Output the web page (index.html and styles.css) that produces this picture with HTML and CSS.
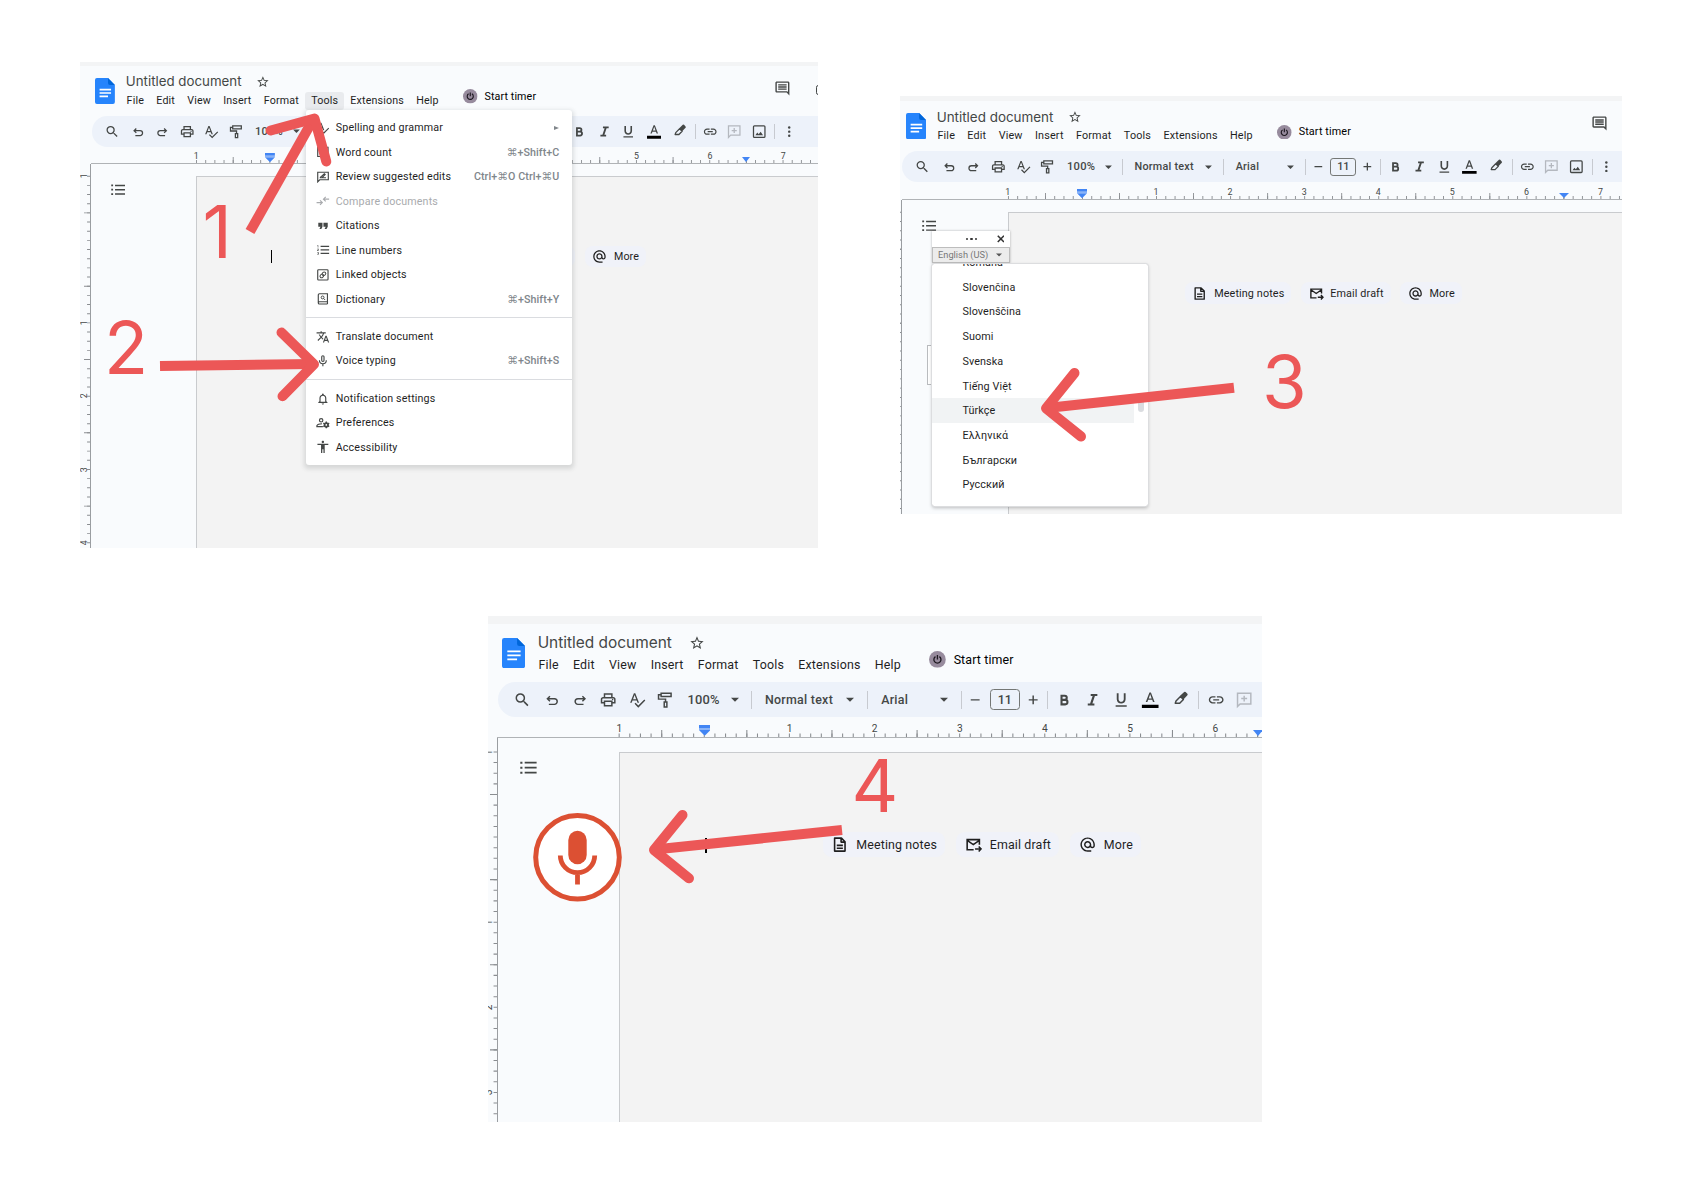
FILE: index.html
```
<!DOCTYPE html>
<html lang="en">
<head>
  <meta charset="UTF-8" />
  <title>Voice typing in Docs</title>
  <meta name="viewport" content="width=device-width, initial-scale=1" />
  <link rel="stylesheet" href="styles.css">
</head>
<body>

  <!-- shared icons -->
  <svg class="defs" width="0" height="0">
    <symbol id="i-logo" viewBox="0 0 26 34"><path fill="#2684fc" d="M2.500 0H17l9 9v22.500a2.500 2.500 0 0 1-2.500 2.500h-21A2.500 2.500 0 0 1 0 31.500v-29A2.500 2.500 0 0 1 2.500 0z"/><path fill="#0066da" d="M17 0l9 9h-6.500A2.500 2.500 0 0 1 17 6.500z"/><path fill="#fff" d="M6 14h15v2.200H6zM6 18.500h15v2.200H6zM6 23h11v2.200H6z"/></symbol>
    <symbol id="i-star" viewBox="0 0 24 24"><path fill="currentColor" d="M22 9.240l-7.190-.62L12 2 9.190 8.630 2 9.240l5.460 4.730L5.820 21 12 17.270 18.180 21l-1.630-7.030L22 9.240zM12 15.400l-3.760 2.270 1-4.280-3.320-2.880 4.380-.38L12 6.100l1.710 4.040 4.380.38-3.320 2.880 1 4.280L12 15.400z"/></symbol>
    <symbol id="i-power" viewBox="0 0 19 19"><circle cx="9.500" cy="9.500" r="9.500" fill="#978b9d"/><path fill="none" stroke="#1d1820" stroke-width="1.500" d="M7.300 6.300a4 4 0 1 0 4.400 0M9.500 4.500v5"/></symbol>
    <symbol id="i-comments" viewBox="0 0 24 24"><path fill="currentColor" d="M21.990 4c0-1.100-.89-2-1.990-2H4c-1.100 0-2 .9-2 2v12c0 1.100.9 2 2 2h14l4 4-.01-18zM20 4v13.170L18.830 16H4V4h16zM6 12h12v2H6zm0-3h12v2H6zm0-3h12v2H6z"/></symbol>
    <symbol id="i-search" viewBox="0 0 24 24"><path fill="currentColor" d="M15.500 14h-.79l-.28-.27A6.471 6.471 0 0 0 16 9.500 6.500 6.500 0 1 0 9.500 16c1.610 0 3.090-.59 4.230-1.570l.27.28v.79l5 4.990L20.490 19l-4.990-5zm-6 0C7.010 14 5 11.990 5 9.500S7.010 5 9.500 5 14 7.010 14 9.500 11.990 14 9.500 14z"/></symbol>
    <symbol id="i-undo" viewBox="0 0 24 24"><path fill="none" stroke="currentColor" stroke-width="2" d="M9 7l-3.500 3.500L9 14M6 10.500h9a3.800 3.800 0 0 1 0 7.600H7.500"/></symbol>
    <symbol id="i-redo" viewBox="0 0 24 24"><path fill="none" stroke="currentColor" stroke-width="2" d="M15 7l3.500 3.500L15 14M18 10.500H9a3.800 3.800 0 0 0 0 7.600h7.500"/></symbol>
    <symbol id="i-print" viewBox="0 0 24 24"><path fill="currentColor" d="M19 8h-1V3H6v5H5c-1.660 0-3 1.340-3 3v6h4v4h12v-4h4v-6c0-1.660-1.340-3-3-3zM8 5h8v3H8V5zm8 12v2H8v-4h8v2zm2-2v-2H6v2H4v-4c0-.55.45-1 1-1h14c.55 0 1 .45 1 1v4h-2z"/><circle cx="18" cy="11.500" r="1" fill="currentColor"/></symbol>
    <symbol id="i-spell" viewBox="0 0 24 24"><path fill="currentColor" d="M12.450 16h2.090L9.430 3H7.570L2.460 16h2.090l1.120-3h5.640l1.140 3zm-6.020-5L8.500 5.480 10.570 11H6.430zm15.160.59l-8.090 8.090L9.830 16l-1.410 1.410 5.090 5.090L23 13l-1.410-1.410z"/></symbol>
    <symbol id="i-paint" viewBox="0 0 24 24"><path fill="none" stroke="currentColor" stroke-width="2" d="M6.500 3H20v4.500H6.500zM6.500 5.200H3V11h9.500v4M10.700 15h3.600v6.500h-3.600z"/></symbol>
    <symbol id="i-caret" viewBox="0 0 10 6"><path fill="currentColor" d="M0 .5h10L5 5.500z"/></symbol>
    <symbol id="i-minus" viewBox="0 0 24 24"><path fill="currentColor" d="M6 11h12v2H6z"/></symbol>
    <symbol id="i-plus" viewBox="0 0 24 24"><path fill="currentColor" d="M18 13h-5v5h-2v-5H6v-2h5V6h2v5h5z"/></symbol>
    <symbol id="i-bold" viewBox="0 0 24 24"><path fill="none" stroke="currentColor" stroke-width="2.800" d="M8.400 6.400h4.300a2.800 2.800 0 0 1 0 5.600H8.400zM8.400 12h5a3.050 3.050 0 0 1 0 6.100h-5zM8.400 5v14.500"/></symbol>
    <symbol id="i-italic" viewBox="0 0 24 24"><path fill="currentColor" d="M10 4v2.700h2.600L9.200 16.800H6v2.700h9v-2.700h-2.700l3.400-10.100H19V4z"/></symbol>
    <symbol id="i-underline" viewBox="0 0 24 24"><path fill="currentColor" d="M12 17c3.310 0 6-2.690 6-6V3h-2.500v8c0 1.930-1.570 3.500-3.500 3.500S8.500 12.930 8.500 11V3H6v8c0 3.310 2.690 6 6 6zM4.500 19.300v2h15v-2h-15z"/></symbol>
    <symbol id="i-color" viewBox="0 0 24 24"><path fill="currentColor" d="M11 2L6 15h2.200l1.100-3h5.400l1.100 3H18L13 2h-2zm-1 8.200l2-5.700 2 5.700z"/><path fill="#000" d="M.7 18.500h22.600V23H.7z"/></symbol>
    <symbol id="i-pen" viewBox="0 0 24 24"><path fill="none" stroke="currentColor" stroke-width="2" stroke-linejoin="round" d="M5 13.500l6-6 4 4-5 5H4z"/><path fill="currentColor" d="M10.500 6.500L16 1.300q1-.8 2 0l2.400 2.500q.8 1 0 2L15 11.500z"/></symbol>
    <symbol id="i-link" viewBox="0 0 24 24"><path fill="currentColor" d="M3.900 12c0-1.710 1.390-3.100 3.100-3.100h4V7H7c-2.760 0-5 2.240-5 5s2.240 5 5 5h4v-1.900H7c-1.710 0-3.100-1.390-3.100-3.100zM8 13h8v-2H8v2zm9-6h-4v1.900h4c1.710 0 3.100 1.390 3.100 3.100s-1.390 3.100-3.100 3.100h-4V17h4c2.760 0 5-2.240 5-5s-2.240-5-5-5z"/></symbol>
    <symbol id="i-addcomment" viewBox="0 0 24 24"><path fill="none" stroke="currentColor" stroke-width="2" d="M3 21V3h18v14.500H6.500zM12 6.300v8M8 10.300h8"/></symbol>
    <symbol id="i-image" viewBox="0 0 24 24"><rect x="3" y="3" width="18" height="18" rx="1.500" fill="none" stroke="currentColor" stroke-width="2"/><path fill="currentColor" d="M6 17.500l3-4 2.200 2.600 3-3.900 3.800 5.300z"/></symbol>
    <symbol id="i-more" viewBox="0 0 24 24"><g fill="currentColor"><circle cx="12" cy="5.500" r="1.900"/><circle cx="12" cy="12" r="1.900"/><circle cx="12" cy="18.500" r="1.900"/></g></symbol>
    <symbol id="i-outline" viewBox="0 0 20 16"><path fill="currentColor" d="M5.500 1H20v2H5.500zM5.500 7H20v2H5.500zM5.500 13H20v2H5.500zM.2 .8h2.600v2.400H.2zM.2 6.800h2.600v2.400H.2zM.2 12.800h2.600v2.400H.2z"/></symbol>
    <symbol id="i-doc" viewBox="0 0 24 24"><path fill="none" stroke="currentColor" stroke-width="2.200" stroke-linejoin="round" d="M5 3h9.500L19.500 8v13H5zM14 3v5.500h5M8 13h8.500M8 17h8.500"/></symbol>
    <symbol id="i-mail" viewBox="0 0 24 24"><path fill="none" stroke="currentColor" stroke-width="2.200" d="M12 19H3V5h17v7M3 6l8.500 6L20 6M14 18h8M19 14.500l3.300 3.500-3.300 3.500"/></symbol>
    <symbol id="i-at" viewBox="0 0 24 24"><path fill="currentColor" d="M12 1.950c-5.520 0-10 4.480-10 10s4.480 10 10 10h5v-2h-5c-4.340 0-8-3.660-8-8s3.660-8 8-8 8 3.660 8 8v1.430c0 .79-.71 1.570-1.500 1.570s-1.500-.78-1.500-1.570v-1.430c0-2.760-2.240-5-5-5s-5 2.240-5 5 2.240 5 5 5c1.380 0 2.640-.56 3.540-1.470.65.89 1.770 1.470 2.960 1.470 1.970 0 3.500-1.600 3.500-3.570v-1.430c0-5.520-4.480-10-10-10zm0 13c-1.660 0-3-1.340-3-3s1.340-3 3-3 3 1.340 3 3-1.340 3-3 3z"/></symbol>
    <symbol id="i-count" viewBox="0 0 24 24"><path fill="none" stroke="currentColor" stroke-width="2" d="M3 4h18v16H3zM7 9h10M7 14h6"/></symbol>
    <symbol id="i-review" viewBox="0 0 24 24"><path fill="none" stroke="currentColor" stroke-width="2" d="M3 20.500V4h18.500v13H6.500zM6.500 13.500h11M7.500 13l7-6.500 1.500 1.500-5 5"/></symbol>
    <symbol id="i-compare" viewBox="0 0 24 24"><path fill="none" stroke="currentColor" stroke-width="2" d="M1 15h9M7 11l4 4-4 4M23 9h-9M17 5l-4 4 4 4"/></symbol>
    <symbol id="i-quote" viewBox="0 0 24 24"><path fill="currentColor" d="M6 17.500h3.300l2-4V6.500H4v7.200h3.800zM15 17.500h3.300l2.200-4V6.500H13v7.200h4z"/></symbol>
    <symbol id="i-lines" viewBox="0 0 24 24"><path fill="currentColor" d="M2 17h2v.5H3v1h1v.5H2v1h3v-4H2v1zm1-9h1V4H2v1h1v3zm-1 3h1.800L2 13.100v.9h3v-1H3.200L5 10.900V10H2v1zm6-6v2h15V5H8zm0 14h15v-2H8v2zm0-6h15v-2H8v2z"/></symbol>
    <symbol id="i-linked" viewBox="0 0 24 24"><rect x="3" y="3" width="18" height="18" rx="1.500" fill="none" stroke="currentColor" stroke-width="2"/><g fill="none" stroke="currentColor" stroke-width="1.700" transform="rotate(-45 12 12)"><rect x="6" y="9.300" width="7" height="5.400" rx="2.700"/><rect x="11" y="9.300" width="7" height="5.400" rx="2.700"/></g></symbol>
    <symbol id="i-dict" viewBox="0 0 24 24"><path fill="none" stroke="currentColor" stroke-width="2" d="M20 17.500V3H6a2 2 0 0 0-2 2v14a2 2 0 0 0 2 2h14M4 18.500q.5-1.500 2-1.500h14V21"/><circle cx="11.500" cy="9.500" r="2.500" fill="none" stroke="currentColor" stroke-width="1.700"/><path stroke="currentColor" stroke-width="1.700" d="M13.500 11.500l2.500 2.500"/></symbol>
    <symbol id="i-translate" viewBox="0 0 24 24"><path fill="currentColor" d="M12.870 15.070l-2.540-2.510.03-.03c1.740-1.940 2.980-4.170 3.710-6.530H17V4h-7V2H8v2H1v1.990h11.170C11.500 7.920 10.440 9.750 9 11.350 8.070 10.320 7.300 9.190 6.690 8h-2c.73 1.630 1.730 3.170 2.980 4.560l-5.090 5.020L4 19l5-5 3.110 3.110.76-2.040zM18.500 10h-2L12 22h2l1.120-3h4.750L21 22h2l-4.500-12zm-2.620 7l1.620-4.330L19.120 17h-3.240z"/></symbol>
    <symbol id="i-mic" viewBox="0 0 24 24"><path fill="none" stroke="currentColor" stroke-width="2" d="M12 3a2 2 0 0 1 2 2v6a2 2 0 0 1-4 0V5a2 2 0 0 1 2-2zM6 11a6 6 0 0 0 12 0M12 17v4.500"/></symbol>
    <symbol id="i-bell" viewBox="0 0 24 24"><path fill="currentColor" d="M12 22c1.100 0 2-.9 2-2h-4c0 1.100.9 2 2 2zm6-6v-5c0-3.070-1.630-5.640-4.500-6.320V4c0-.83-.67-1.500-1.500-1.500s-1.500.67-1.500 1.500v.68C7.640 5.360 6 7.920 6 11v5l-2 2v1h16v-1l-2-2zm-2 1H8v-6c0-2.480 1.510-4.500 4-4.500s4 2.020 4 4.500v6z"/></symbol>
    <symbol id="i-prefs" viewBox="0 0 24 24"><circle cx="9" cy="7.500" r="3" fill="none" stroke="currentColor" stroke-width="2"/><path fill="none" stroke="currentColor" stroke-width="2" d="M12 18.500H1.500v-1.500q1.500-3.500 9-3.500"/><circle cx="18" cy="15.500" r="3" fill="none" stroke="currentColor" stroke-width="3"/><path stroke="currentColor" stroke-width="2.500" d="M18 9.500v3M18 18.500v3M12.800 12.500l2.600 1.500M20.600 17l2.600 1.500M12.800 18.500l2.600-1.500M20.600 14l2.600-1.500"/></symbol>
    <symbol id="i-access" viewBox="0 0 24 24"><path fill="currentColor" d="M12 1.500c1.200 0 2.100.9 2.100 2.100s-.9 2.100-2.100 2.100-2.100-.9-2.100-2.100.9-2.100 2.100-2.100zm9.500 7.300H15.200V22.500h-2.200v-6.500h-2v6.500H8.800V8.800H2.500V6.700h19z"/></symbol>
    <symbol id="i-hticks" viewBox="0 0 1000 8">
      <path stroke="#8a8d91" stroke-width="4" stroke-dasharray="1.200 10.800" d="M137 6H1000"/>
      <path stroke="#8a8d91" stroke-width="8" stroke-dasharray="1.200 94.800" d="M185 4H1000"/>
    </symbol>
    <symbol id="i-vticks" viewBox="0 0 8 700">
      <path stroke="#8a8d91" stroke-width="4" stroke-dasharray="1.200 10.800" d="M6 15V700"/>
      <path stroke="#8a8d91" stroke-width="8" stroke-dasharray="1.200 94.800" d="M4 63V700"/>
    </symbol>
    <symbol id="i-indent" viewBox="0 0 13 12"><path fill="#4285f4" d="M0 0h13v3.500H0zM0 5.500h13L6.500 12z"/><path fill="#8ab4f8" d="M0 3.500h13v2H0z"/></symbol>
  </svg>

  <main class="board">
    <div class="top">

      <!-- step 1 and 2: tools menu -->
      <section class="shot shot-menu">
        <div class="doc">
          <header class="header">
            <svg class="logo"><use href="#i-logo"/></svg>
            <div class="titles">
              <div class="title"><span class="name">Untitled document</span><svg class="star"><use href="#i-star"/></svg></div>
              <nav class="menubar"><span>File</span><span>Edit</span><span>View</span><span>Insert</span><span>Format</span><span class="active">Tools</span><span>Extensions</span><span>Help</span></nav>
            </div>
            <div class="timer"><svg><use href="#i-power"/></svg>Start timer</div>
            <svg class="comments"><use href="#i-comments"/></svg>
            <div class="meet"></div>
          </header>
          <div class="toolbar">
            <svg class="ic search"><use href="#i-search"/></svg>
            <svg class="ic"><use href="#i-undo"/></svg>
            <svg class="ic"><use href="#i-redo"/></svg>
            <svg class="ic"><use href="#i-print"/></svg>
            <svg class="ic"><use href="#i-spell"/></svg>
            <svg class="ic"><use href="#i-paint"/></svg>
            <div class="select zoom-level"><span>100%</span><svg><use href="#i-caret"/></svg></div>
            <i class="sep"></i>
            <div class="select style"><span>Normal text</span><svg><use href="#i-caret"/></svg></div>
            <i class="sep"></i>
            <div class="select font"><span>Arial</span><svg><use href="#i-caret"/></svg></div>
            <i class="sep"></i>
            <svg class="ic"><use href="#i-minus"/></svg>
            <span class="size">11</span>
            <svg class="ic plus"><use href="#i-plus"/></svg>
            <i class="sep after-size"></i>
            <svg class="ic"><use href="#i-bold"/></svg>
            <svg class="ic"><use href="#i-italic"/></svg>
            <svg class="ic"><use href="#i-underline"/></svg>
            <svg class="ic color"><use href="#i-color"/></svg>
            <svg class="ic pen"><use href="#i-pen"/></svg>
            <i class="sep wide"></i>
            <svg class="ic"><use href="#i-link"/></svg>
            <svg class="ic off"><use href="#i-addcomment"/></svg>
            <svg class="ic"><use href="#i-image"/></svg>
            <i class="sep wide"></i>
            <svg class="ic"><use href="#i-more"/></svg>
          </div>
          <div class="hruler">
            <span>1</span><span></span><span>1</span><span>2</span><span>3</span><span>4</span><span>5</span><span>6</span><span>7</span>
            <svg class="hticks"><use href="#i-hticks"/></svg>
            <svg class="indent"><use href="#i-indent"/></svg>
            <i class="indent-right"></i>
          </div>
          <div class="workspace">
            <div class="vruler">
              <span>1</span><span></span><span>1</span><span>2</span><span>3</span><span>4</span>
              <svg class="vticks"><use href="#i-vticks"/></svg>
            </div>
            <aside class="side"><svg><use href="#i-outline"/></svg></aside>
            <div class="page">
              <i class="cursor"></i>
              <div class="chips">
                <span class="chip"><svg><use href="#i-doc"/></svg>Meeting notes</span>
                <span class="chip"><svg><use href="#i-mail"/></svg>Email draft</span>
                <span class="chip"><svg><use href="#i-at"/></svg>More</span>
              </div>
            </div>
          </div>

          <ul class="menu">
            <li><svg><use href="#i-spell"/></svg>Spelling and grammar<kbd class="arrow"></kbd></li>
            <li><svg><use href="#i-count"/></svg>Word count<kbd>⌘+Shift+C</kbd></li>
            <li><svg><use href="#i-review"/></svg>Review suggested edits<kbd>Ctrl+⌘O Ctrl+⌘U</kbd></li>
            <li class="disabled"><svg><use href="#i-compare"/></svg>Compare documents</li>
            <li><svg><use href="#i-quote"/></svg>Citations</li>
            <li><svg><use href="#i-lines"/></svg>Line numbers</li>
            <li><svg><use href="#i-linked"/></svg>Linked objects</li>
            <li><svg><use href="#i-dict"/></svg>Dictionary<kbd>⌘+Shift+Y</kbd></li>
            <li class="line"></li>
            <li><svg><use href="#i-translate"/></svg>Translate document</li>
            <li><svg><use href="#i-mic"/></svg>Voice typing<kbd>⌘+Shift+S</kbd></li>
            <li class="line"></li>
            <li><svg><use href="#i-bell"/></svg>Notification settings</li>
            <li><svg><use href="#i-prefs"/></svg>Preferences</li>
            <li><svg><use href="#i-access"/></svg>Accessibility</li>
          </ul>
        </div>
      </section>

      <!-- step 3: language list -->
      <section class="shot shot-lang">
        <div class="doc">
          <header class="header">
            <svg class="logo"><use href="#i-logo"/></svg>
            <div class="titles">
              <div class="title"><span class="name">Untitled document</span><svg class="star"><use href="#i-star"/></svg></div>
              <nav class="menubar"><span>File</span><span>Edit</span><span>View</span><span>Insert</span><span>Format</span><span>Tools</span><span>Extensions</span><span>Help</span></nav>
            </div>
            <div class="timer"><svg><use href="#i-power"/></svg>Start timer</div>
            <svg class="comments"><use href="#i-comments"/></svg>
          </header>
          <div class="toolbar">
            <svg class="ic search"><use href="#i-search"/></svg>
            <svg class="ic"><use href="#i-undo"/></svg>
            <svg class="ic"><use href="#i-redo"/></svg>
            <svg class="ic"><use href="#i-print"/></svg>
            <svg class="ic"><use href="#i-spell"/></svg>
            <svg class="ic"><use href="#i-paint"/></svg>
            <div class="select zoom-level"><span>100%</span><svg><use href="#i-caret"/></svg></div>
            <i class="sep"></i>
            <div class="select style"><span>Normal text</span><svg><use href="#i-caret"/></svg></div>
            <i class="sep"></i>
            <div class="select font"><span>Arial</span><svg><use href="#i-caret"/></svg></div>
            <i class="sep"></i>
            <svg class="ic"><use href="#i-minus"/></svg>
            <span class="size">11</span>
            <svg class="ic plus"><use href="#i-plus"/></svg>
            <i class="sep after-size"></i>
            <svg class="ic"><use href="#i-bold"/></svg>
            <svg class="ic"><use href="#i-italic"/></svg>
            <svg class="ic"><use href="#i-underline"/></svg>
            <svg class="ic color"><use href="#i-color"/></svg>
            <svg class="ic pen"><use href="#i-pen"/></svg>
            <i class="sep wide"></i>
            <svg class="ic"><use href="#i-link"/></svg>
            <svg class="ic off"><use href="#i-addcomment"/></svg>
            <svg class="ic"><use href="#i-image"/></svg>
            <i class="sep wide"></i>
            <svg class="ic"><use href="#i-more"/></svg>
          </div>
          <div class="hruler">
            <span>1</span><span></span><span>1</span><span>2</span><span>3</span><span>4</span><span>5</span><span>6</span><span>7</span>
            <svg class="hticks"><use href="#i-hticks"/></svg>
            <svg class="indent"><use href="#i-indent"/></svg>
            <i class="indent-right"></i>
          </div>
          <div class="workspace">
            <div class="vruler">
              <svg class="vticks"><use href="#i-vticks"/></svg>
            </div>
            <aside class="side"><svg><use href="#i-outline"/></svg></aside>
            <div class="page">
              <div class="chips">
                <span class="chip"><svg><use href="#i-doc"/></svg>Meeting notes</span>
                <span class="chip"><svg><use href="#i-mail"/></svg>Email draft</span>
                <span class="chip"><svg><use href="#i-at"/></svg>More</span>
              </div>
            </div>
          </div>

          <div class="tip"></div>
          <div class="voice">
            <div class="voice-top"><span class="dots"><i></i><i></i><i></i></span><svg class="close" viewBox="0 0 10 10"><path d="M1 1l8 8M9 1l-8 8"/></svg></div>
            <div class="voice-lang"><span>English (US)</span><svg><use href="#i-caret"/></svg></div>
          </div>
          <div class="langs">
            <ul>
              <li>Română</li>
              <li>Slovenčina</li>
              <li>Slovenščina</li>
              <li>Suomi</li>
              <li>Svenska</li>
              <li>Tiếng Việt</li>
              <li class="hover">Türkçe</li>
              <li>Ελληνικά</li>
              <li>Български</li>
              <li>Русский</li>
              <li>Српски</li>
            </ul>
            <i class="thumb"></i>
          </div>
        </div>
      </section>
    </div>

    <!-- step 4: microphone -->
    <section class="shot shot-mic">
      <div class="doc">
        <header class="header">
          <svg class="logo"><use href="#i-logo"/></svg>
          <div class="titles">
            <div class="title"><span class="name">Untitled document</span><svg class="star"><use href="#i-star"/></svg></div>
            <nav class="menubar"><span>File</span><span>Edit</span><span>View</span><span>Insert</span><span>Format</span><span>Tools</span><span>Extensions</span><span>Help</span></nav>
          </div>
          <div class="timer"><svg><use href="#i-power"/></svg>Start timer</div>
        </header>
        <div class="toolbar">
          <svg class="ic search"><use href="#i-search"/></svg>
          <svg class="ic"><use href="#i-undo"/></svg>
          <svg class="ic"><use href="#i-redo"/></svg>
          <svg class="ic"><use href="#i-print"/></svg>
          <svg class="ic"><use href="#i-spell"/></svg>
          <svg class="ic"><use href="#i-paint"/></svg>
          <div class="select zoom-level"><span>100%</span><svg><use href="#i-caret"/></svg></div>
          <i class="sep"></i>
          <div class="select style"><span>Normal text</span><svg><use href="#i-caret"/></svg></div>
          <i class="sep"></i>
          <div class="select font"><span>Arial</span><svg><use href="#i-caret"/></svg></div>
          <i class="sep"></i>
          <svg class="ic"><use href="#i-minus"/></svg>
          <span class="size">11</span>
          <svg class="ic plus"><use href="#i-plus"/></svg>
          <i class="sep after-size"></i>
          <svg class="ic"><use href="#i-bold"/></svg>
          <svg class="ic"><use href="#i-italic"/></svg>
          <svg class="ic"><use href="#i-underline"/></svg>
          <svg class="ic color"><use href="#i-color"/></svg>
          <svg class="ic pen"><use href="#i-pen"/></svg>
          <i class="sep wide"></i>
          <svg class="ic"><use href="#i-link"/></svg>
          <svg class="ic off"><use href="#i-addcomment"/></svg>
        </div>
        <div class="hruler">
          <span>1</span><span></span><span>1</span><span>2</span><span>3</span><span>4</span><span>5</span><span>6</span>
          <svg class="hticks"><use href="#i-hticks"/></svg>
          <svg class="indent"><use href="#i-indent"/></svg>
          <i class="indent-right"></i>
        </div>
        <div class="workspace">
          <div class="vruler">
            <span>1</span><span></span><span>1</span><span>2</span><span>3</span>
            <svg class="vticks"><use href="#i-vticks"/></svg>
          </div>
          <aside class="side"><svg><use href="#i-outline"/></svg></aside>
          <div class="page">
            <i class="cursor"></i>
            <div class="chips">
              <span class="chip"><svg><use href="#i-doc"/></svg>Meeting notes</span>
              <span class="chip"><svg><use href="#i-mail"/></svg>Email draft</span>
              <span class="chip"><svg><use href="#i-at"/></svg>More</span>
            </div>
          </div>
        </div>
      </div>
    </section>

    <!-- arrows, step numbers and the microphone badge -->
    <svg class="notes" viewBox="0 0 1684 1190">
      <circle class="mic-ring" cx="577.500" cy="857.300" r="41.800"/>
      <rect class="mic-fill" x="568.300" y="830.700" width="18.400" height="33.500" rx="9.200"/>
      <path class="mic-line" d="M560.300 855.500a17.200 17.200 0 0 0 34.400 0M577.500 873v11.500"/>

      <path class="shaft" d="M250 231.500L314 118"/>
      <path class="head" d="M270.700 130.500L314.500 118.500L326.300 161.500"/>
      <path class="shaft" d="M160 366L312 364"/>
      <path class="head" d="M281.500 332.500L314 364.300L282.500 396.300"/>
      <path class="shaft" d="M1234 387.700L1047 408"/>
      <path class="head" d="M1074.500 373L1046 408.300L1081 436.500"/>
      <path class="shaft" d="M842 830L655 849.500"/>
      <path class="head" d="M682.500 815L654 850L689 878.300"/>

      <text x="202.500" y="258.300">1</text>
      <text x="104" y="374">2</text>
      <text x="1262" y="408.300">3</text>
      <text x="851.500" y="812.300">4</text>
    </svg>
  </main>

</body>
</html>
```
FILE: styles.css
```
body {
  margin: 0;
  background: #fff;
  font-family: Roboto, "Liberation Sans", sans-serif;
}

ul {
  list-style: none;
  margin: 0;
  padding: 0;
}

.defs {
  display: block;
}

.board {
  position: relative;
  width: 1684px;
  height: 1190px;
  overflow: hidden;
}

.top {
  display: flex;
  align-items: flex-start;
  gap: 82px;
  height: 616px;
  padding-left: 80px;
  box-sizing: border-box;
}

/* each shot is the same window, cropped and scaled */
.shot {
  flex: none;
  box-sizing: border-box;
  overflow: hidden;
  background: #f9fbfd;
  border-top: 4px solid #f3f4f5;
}

.shot-menu {
  width: 738px;
  height: 486px;
  margin-top: 62px;
}

.shot-lang {
  width: 722px;
  height: 418px;
  margin-top: 96px;
  border-top-width: 5px;
}

.shot-mic {
  width: 774px;
  height: 506px;
  margin-left: 488px;
  border-top-width: 8px;
}

.doc {
  position: relative;
  width: 1000px;
  height: 700px;
  color: #1f1f1f;
  font-size: 14px;
}

.shot-menu .doc {
  zoom: 0.7646;
}

.shot-lang .doc {
  zoom: 0.772;
  margin-left: -12.5px;
}

.shot-mic .doc {
  zoom: 0.887;
  margin-left: -4px;
}

/* header */
.header {
  display: flex;
  align-items: flex-start;
  height: 65.3px;
  padding-left: 20px;
}

.logo {
  width: 26px;
  height: 34px;
  margin-top: 15.5px;
}

.titles {
  width: 448.5px;
  margin-left: 7px;
  padding-top: 8px;
}

.title {
  display: flex;
  align-items: center;
  height: 26px;
  line-height: 26px;
  padding-left: 7px;
  font-family: Inter, sans-serif;
  font-size: 17.4px;
  color: #444746;
}

.name {
  width: 151px;
  height: 26px;
  white-space: nowrap;
}

.star {
  width: 18px;
  height: 18px;
  margin-left: 19.5px;
}

.menubar {
  display: flex;
  letter-spacing: 0.21px;
}

.menubar span {
  height: 24px;
  line-height: 24px;
  padding: 0 8px;
}

.menubar .active {
  background: #e9ebee;
  border-radius: 4px;
}

.timer {
  display: flex;
  align-items: center;
  gap: 8.5px;
  width: 100px;
  height: 24px;
  margin-top: 28px;
  color: #000;
  letter-spacing: 0.15px;
  white-space: nowrap;
}

.timer svg {
  width: 19px;
  height: 19px;
}

.comments {
  width: 22px;
  height: 22px;
  margin: 18.5px 0 0 306px;
  color: #444746;
}

.meet {
  width: 20px;
  height: 10px;
  margin: 25px 0 0 33px;
  border: 2px solid #444746;
  border-radius: 3px;
}

/* toolbar */
.toolbar {
  display: flex;
  align-items: center;
  height: 40px;
  margin-left: 15.5px;
  padding-left: 10.5px;
  border-radius: 20px 0 0 20px;
  background: #edf2fa;
  color: #444746;
  font-weight: 500;
  box-sizing: border-box;
}

.ic {
  flex: none;
  width: 20px;
  height: 20px;
  padding: 0 6px;
}

.search {
  margin-right: 2px;
}

.select {
  flex: none;
  display: flex;
  align-items: center;
  justify-content: space-between;
  box-sizing: border-box;
  letter-spacing: 0.3px;
  white-space: nowrap;
}

.select svg {
  width: 9px;
  height: 6px;
}

.zoom-level {
  width: 80.5px;
  padding: 0 13px 0 9px;
}

.zoom-level span {
  font-size: 14.5px;
}

.style {
  width: 129.5px;
  padding: 0 14.5px 0 15px;
}

.font {
  width: 105px;
  padding: 0 14px 0 15.5px;
}

.sep {
  flex: none;
  width: 1px;
  height: 20px;
  background: #c7cad0;
}

.sep.after-size {
  margin: 0 2.5px 0 0;
}

.sep.wide {
  margin: 0 2.5px 0 4px;
}

.size {
  flex: none;
  width: 34px;
  height: 24px;
  line-height: 22px;
  border: 1px solid #747775;
  border-radius: 4px;
  box-sizing: border-box;
  text-align: center;
}

.plus {
  margin: 0 0 0 -1.5px;
}

.color {
  margin-left: 1px;
}

.pen {
  margin-left: 2.5px;
}

.off {
  color: #b4b8bf;
}

/* rulers */
.hruler {
  position: relative;
  display: flex;
  height: 23.2px;
  margin-left: 14.5px;
  padding-left: 89.5px;
  box-sizing: border-box;
  border-bottom: 1px solid #b0b3b6;
  color: #444746;
  font-size: 11.5px;
}

.hruler span {
  flex: none;
  width: 96px;
  line-height: 26px;
  text-align: center;
}

.hticks {
  position: absolute;
  left: 0;
  bottom: 0;
  width: 1000px;
  height: 8px;
}

.indent {
  position: absolute;
  left: 227px;
  bottom: 1px;
  width: 13px;
  height: 12px;
}

.indent-right {
  position: absolute;
  left: 851.5px;
  bottom: 1px;
  border: 6.5px solid transparent;
  border-top: 7px solid #4285f4;
  border-bottom: 0;
}

.workspace {
  display: flex;
  height: 571px;
}

.vruler {
  position: relative;
  flex: none;
  width: 15px;
  box-sizing: border-box;
  border-right: 1px solid #9a9da1;
  color: #444746;
  font-size: 11.5px;
  padding: 4px 0 0 1px;
}

.vruler span {
  display: block;
  width: 9px;
  height: 24px;
  margin-bottom: 72px;
  line-height: 9px;
  text-align: center;
  writing-mode: vertical-rl;
  transform: rotate(180deg);
}

.vticks {
  position: absolute;
  right: 0;
  top: 0;
  width: 8px;
  height: 700px;
}

.side {
  width: 137px;
  flex: none;
}

.side svg {
  display: block;
  width: 19px;
  height: 15px;
  margin: 26px 0 0 25.5px;
  color: #444746;
}

.page {
  position: relative;
  flex: 1;
  margin-top: 15.3px;
  background: #f3f3f3;
  border: 1px solid #c9cbce;
  border-right: 0;
}

.cursor {
  position: absolute;
  left: 96px;
  top: 96px;
  width: 2px;
  height: 17px;
  background: #000;
}

.chips {
  display: flex;
  gap: 12.3px;
  margin: 90px 0 0 228px;
}

.chip {
  display: flex;
  align-items: center;
  gap: 8.7px;
  height: 28px;
  padding: 0 9px 0 10px;
  border-radius: 10px;
  background: #f0f2f9;
  letter-spacing: 0.15px;
}

.chip svg {
  width: 19.5px;
  height: 19.5px;
}

/* tools menu */
.menu {
  position: absolute;
  left: 295.5px;
  top: 58px;
  width: 348px;
  box-sizing: border-box;
  padding: 7px 0;
  border-radius: 4px;
  background: #fff;
  box-shadow: 0 2px 6px 2px rgba(60, 64, 67, 0.15);
}

.menu li {
  display: flex;
  align-items: center;
  height: 32px;
  padding: 0 16.5px 0 13px;
  letter-spacing: 0.2px;
}

.menu svg {
  width: 18px;
  height: 18px;
  margin-right: 8px;
  color: #444746;
}

.menu kbd {
  margin-left: auto;
  font-family: Roboto, "DejaVu Sans", sans-serif;
  font-weight: 500;
  letter-spacing: 0.1px;
  color: #80868b;
}

.menu .arrow {
  border: 3.5px solid transparent;
  border-left: 7px solid #80868b;
  border-right: 0;
}

.menu .disabled,
.menu .disabled svg {
  color: #a9abae;
}

.menu .line {
  height: 1px;
  padding: 0;
  margin: 8px 0;
  background: #dadce0;
}

/* voice typing box and language list */
.tip {
  position: absolute;
  left: 47px;
  top: 315.5px;
  width: 30px;
  height: 52px;
  background: #fff;
  border: 1px solid #b9bbbe;
  box-sizing: border-box;
}

.voice {
  position: absolute;
  left: 54.5px;
  top: 168px;
  width: 100px;
  background: #fff;
  box-shadow: 0 0 3px rgba(0, 0, 0, 0.3);
}

.voice-top {
  display: flex;
  align-items: center;
  justify-content: flex-end;
  gap: 25px;
  height: 21px;
  padding-right: 7px;
}

.dots {
  display: flex;
  gap: 3px;
}

.dots i {
  width: 3px;
  height: 3px;
  border-radius: 50%;
  background: #333;
}

.close {
  width: 10px;
  height: 10px;
  fill: none;
  stroke: #333;
  stroke-width: 2;
}

.voice-lang {
  display: flex;
  align-items: center;
  justify-content: space-between;
  height: 21px;
  padding: 0 8px 0 6px;
  box-sizing: border-box;
  background: #ececec;
  border: 1px solid #bdbdbd;
  color: #777;
  font-size: 12px;
}

.voice-lang svg {
  width: 8px;
  height: 5px;
  color: #555;
}

.langs {
  position: absolute;
  left: 54.5px;
  top: 210.5px;
  width: 279px;
  height: 314px;
  overflow: hidden;
  border-radius: 3px;
  background: #fff;
  outline: 1px solid #dcdddf;
  box-shadow: 0 2px 5px rgba(0, 0, 0, 0.25);
}

.langs ul {
  width: 261.5px;
  margin-top: -17.5px;
}

.langs li {
  height: 32px;
  line-height: 33px;
  padding-left: 39px;
  letter-spacing: 0.1px;
}

.langs li:last-child {
  line-height: 36px;
}

.langs .hover {
  background: #f1f3f4;
}

.thumb {
  position: absolute;
  right: 5px;
  top: 168px;
  width: 8px;
  height: 24px;
  border-radius: 4px;
  background: #dadce0;
}

/* annotations over the shots */
.notes {
  position: absolute;
  left: 0;
  top: 0;
  width: 1684px;
  height: 1190px;
}

.notes text {
  font-family: Inter, sans-serif;
  font-size: 72.5px;
  fill: #ec5757;
}

.shaft,
.head {
  fill: none;
  stroke: #ec5757;
  stroke-width: 10px;
}

.head {
  stroke-linecap: round;
  stroke-linejoin: round;
}

.mic-ring {
  fill: #fff;
  stroke: #dc5033;
  stroke-width: 5px;
}

.mic-fill {
  fill: #dc5033;
}

.mic-line {
  fill: none;
  stroke: #dc5033;
  stroke-width: 4.800px;
}
```
